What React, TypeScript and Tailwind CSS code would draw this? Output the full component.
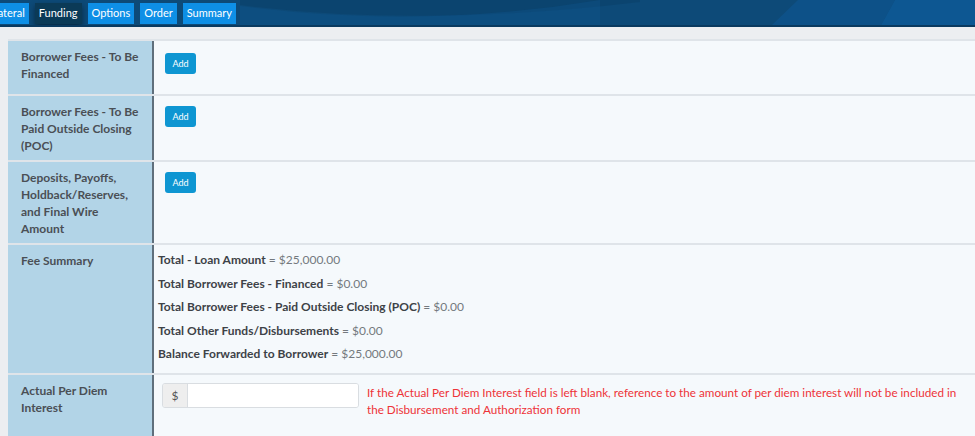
import React from "react";

const font = { fontFamily: "Lato, 'Open Sans', Arial, sans-serif" };

function Tab({ label, active }: { label: string; active?: boolean }) {
  return (
    <div
      className={
        active
          ? "h-[21px] px-[4px] flex items-center text-[11px] text-white bg-[#0b3a57] shadow-[0_3px_6px_rgba(0,0,0,0.45)]"
          : "h-[21px] px-[4px] flex items-center text-[11px] text-white bg-[#0e8fe6]"
      }
    >
      {label}
    </div>
  );
}

function AddButton() {
  return (
    <button className="w-[31px] h-[21px] rounded-[3px] bg-[#0e96d2] text-white text-[9px] leading-none flex items-center justify-center">
      Add
    </button>
  );
}

function Row({
  label,
  height,
  children,
}: {
  label: React.ReactNode;
  height: string;
  children: React.ReactNode;
}) {
  return (
    <div className={`flex border-t-2 border-[#dfe4e9] ${height}`}>
      <div className="w-[146px] shrink-0 bg-[#b2d4e7] border-r-2 border-[#5f6f7c] pl-[13px] pr-2 pt-[7px] text-[12px] leading-[17px] font-bold text-[#4a4f55]">
        {label}
      </div>
      <div className="flex-1 min-w-0 bg-[#f5f9fc]">{children}</div>
    </div>
  );
}

function SumLine({ label, value }: { label: string; value: string }) {
  return (
    <div className="h-[17px] leading-[17px] text-[12px] whitespace-nowrap">
      <span className="font-bold text-[#3d4247]">{label}</span>
      <span className="text-[#74797e]"> = {value}</span>
    </div>
  );
}

export default function App() {
  return (
    <div className="w-[975px] h-[436px] overflow-hidden bg-[#eceef1]" style={font}>
      <div className="relative h-[27px] bg-[#0d4a78] border-b-2 border-[#0a3a60] overflow-hidden">
        <svg className="absolute inset-0" width="975" height="27" viewBox="0 0 975 27" preserveAspectRatio="none">
          <path d="M240 5 Q420 28 640 2 L640 0 L240 0 Z" fill="#0b416b" opacity="0.7" />
          <path d="M600 0 Q420 30 240 6 L240 27 L600 27 Z" fill="#0f5590" opacity="0.35" />
          <path d="M770 27 L798 0 L895 0 L880 27 Z" fill="#0f5895" opacity="0.55" />
          <path d="M880 27 L895 0 L975 0 L975 27 Z" fill="#0e5a98" opacity="0.8" />
        </svg>
        <div className="relative flex items-center gap-[6px] pt-[3px] ml-[-25px]">
          <Tab label="Collateral" />
          <Tab label="Funding" active />
          <Tab label="Options" />
          <Tab label="Order" />
          <Tab label="Summary" />
        </div>
      </div>

      <div className="pl-[8px] pt-[12px]">
        <div className="flex flex-col">
          <Row label="Borrower Fees - To Be Financed" height="h-[55px]">
            <div className="pl-[11px] pt-[12px]">
              <AddButton />
            </div>
          </Row>
          <Row label="Borrower Fees - To Be Paid Outside Closing (POC)" height="h-[66px]">
            <div className="pl-[11px] pt-[10px]">
              <AddButton />
            </div>
          </Row>
          <Row label="Deposits, Payoffs, Holdback/Reserves, and Final Wire Amount" height="h-[83px]">
            <div className="pl-[11px] pt-[10px]">
              <AddButton />
            </div>
          </Row>
          <Row label="Fee Summary" height="h-[130px]">
            <div className="pl-[4px] pt-[6px] flex flex-col gap-[6.5px]">
              <SumLine label="Total - Loan Amount" value="$25,000.00" />
              <SumLine label="Total Borrower Fees - Financed" value="$0.00" />
              <SumLine label="Total Borrower Fees - Paid Outside Closing (POC)" value="$0.00" />
              <SumLine label="Total Other Funds/Disbursements" value="$0.00" />
              <SumLine label="Balance Forwarded to Borrower" value="$25,000.00" />
            </div>
          </Row>
          <Row label="Actual Per Diem Interest" height="h-[70px]">
            <div className="flex items-start pl-[8px] pt-[8px] gap-[8px] pr-[6px]">
              <div className="flex h-[25px] w-[197px] shrink-0 rounded-[3px] border border-[#d9dde1] overflow-hidden">
                <div className="w-[25px] shrink-0 bg-[#eeeeee] border-r border-[#d9dde1] flex items-center justify-center text-[12px] text-[#555]">
                  $
                </div>
                <input className="flex-1 min-w-0 w-0 bg-white outline-none" />
              </div>
              <p className="pt-[1px] text-[11.7px] leading-[17px] text-[#ee3338]">
                If the Actual Per Diem Interest field is left blank, reference to the amount of per diem interest will not be included in the Disbursement and Authorization form
              </p>
            </div>
          </Row>
        </div>
      </div>
    </div>
  );
}
